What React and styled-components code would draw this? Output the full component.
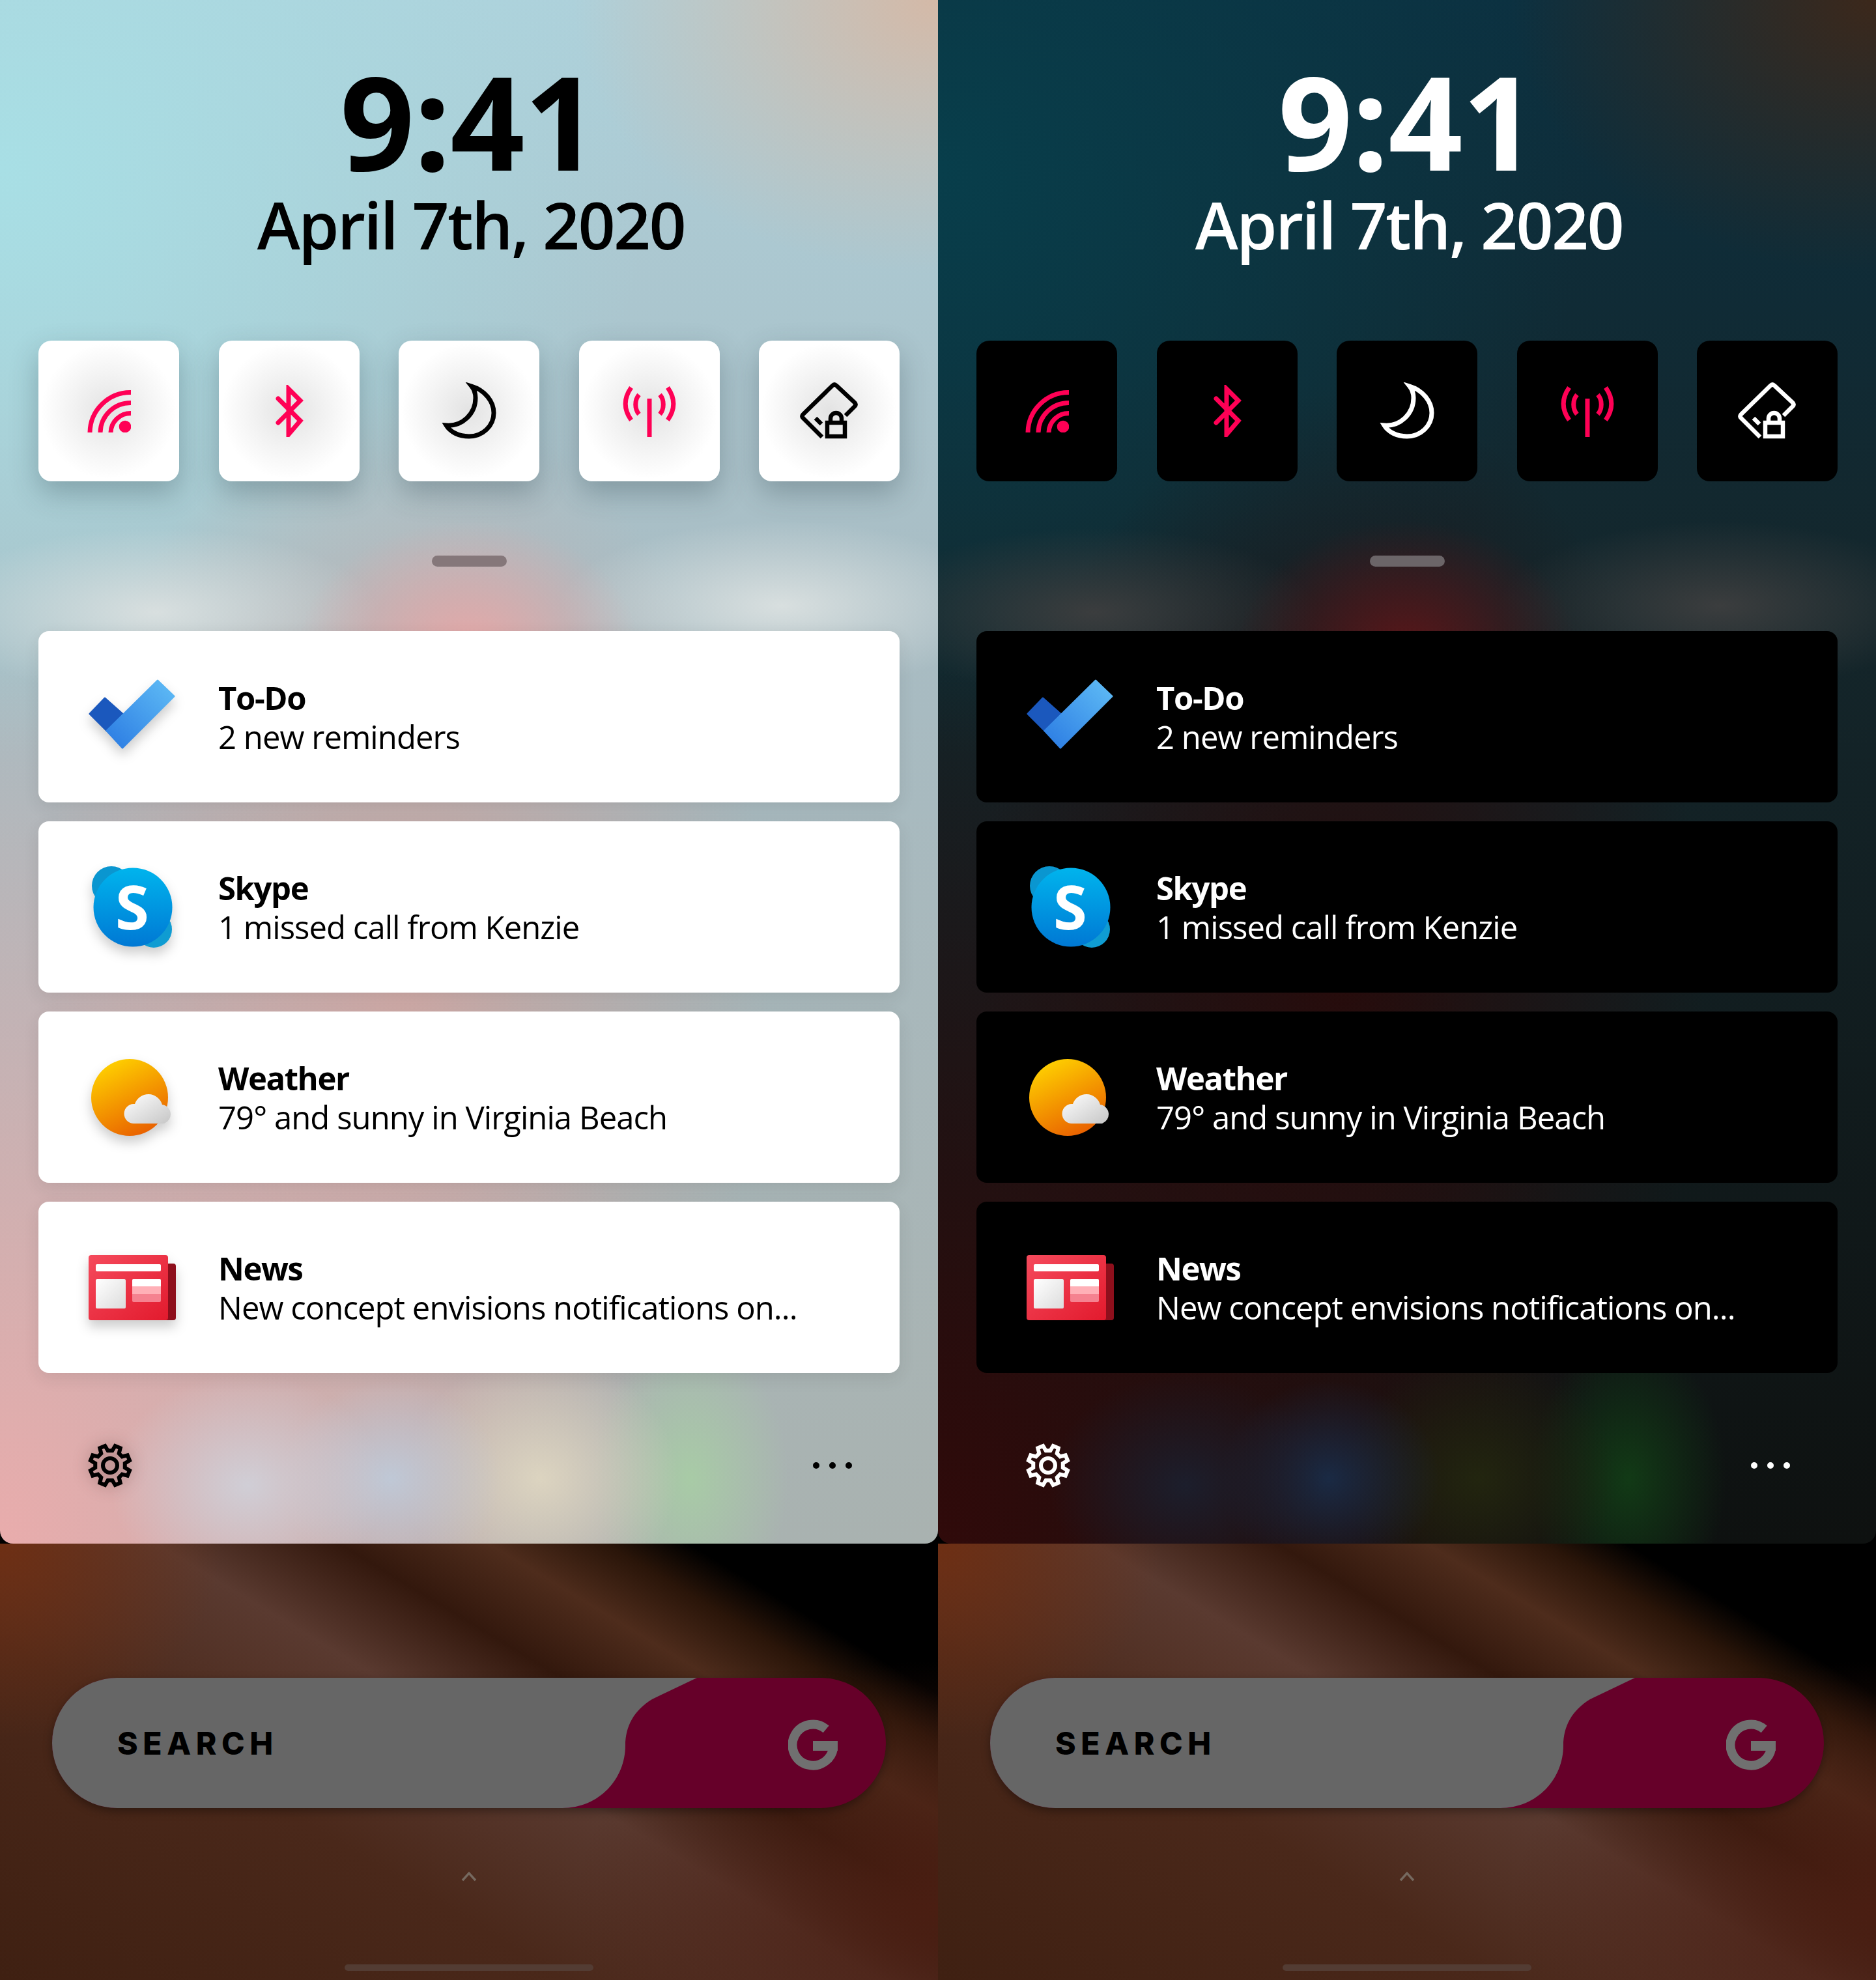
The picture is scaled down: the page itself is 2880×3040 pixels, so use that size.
import React from 'react'
import styled, { createGlobalStyle, ThemeProvider } from 'styled-components'

const GlobalStyle = createGlobalStyle`
  html, body {
    margin: 0;
    padding: 0;
    background: #000;
  }
  * {
    box-sizing: border-box;
  }
`

const PINK = '#ff0055'

const wallpaper = (c) => `
  radial-gradient(210px 170px at 380px 2280px, ${c.blobA}, transparent),
  radial-gradient(170px 150px at 600px 2270px, ${c.blobB}, transparent),
  radial-gradient(210px 190px at 830px 2270px, ${c.blobC}, transparent),
  radial-gradient(150px 220px at 1060px 2270px, ${c.blobD}, transparent),
  radial-gradient(260px 190px at 720px 990px, ${c.spot}, transparent),
  radial-gradient(340px 130px at 240px 940px, ${c.haze}, transparent),
  radial-gradient(340px 130px at 1200px 930px, ${c.haze}, transparent),
  radial-gradient(1050px 1350px at 0 2370px, ${c.corner}, transparent),
  radial-gradient(560px 900px at 620px 1500px, ${c.blush}, transparent),
  radial-gradient(560px 420px at 1440px 0, ${c.warm}, transparent),
  radial-gradient(1000px 900px at 0 260px, ${c.cool}, transparent),
  linear-gradient(180deg, ${c.top} 0, ${c.mid} 40%, ${c.end} 100%)
`

const lightTheme = {
  ink: '#000',
  card: '#fff',
  tile: 'radial-gradient(circle at center, #e3e3e3 0, #f3f3f3 38%, #fff 68%)',
  tileShadow: '0 18px 44px rgba(40, 60, 70, .3)',
  cardShadow: '0 8px 24px rgba(40, 40, 40, .1)',
  gearShadow: 'drop-shadow(0 0 12px rgba(60, 30, 30, .35))',
  handle: '#85777a',
  wall: wallpaper({
    blobA: '#d0ced6', blobB: '#bfc8d6', blobC: '#dcd4c0', blobD: '#a8cba6',
    spot: '#e4a8a8', haze: '#d8dfdf', corner: '#e9acac', blush: '#cba9a5',
    warm: '#d4b9a7', cool: '#a8dfe5', top: '#aed0da', mid: '#a8bcc3', end: '#a9b2b0'
  })
}

const darkTheme = {
  ink: '#fff',
  card: '#000',
  tile: '#000',
  tileShadow: 'none',
  cardShadow: 'none',
  gearShadow: 'none',
  handle: '#6b6568',
  wall: wallpaper({
    blobA: '#1c1e2c', blobB: '#1a2a44', blobC: '#22250f', blobD: '#123a16',
    spot: '#57171a', haze: '#3b3d3e', corner: '#300a0a', blush: '#250c0c',
    warm: '#3c281b', cool: '#083e4b', top: '#0c3040', mid: '#14262b', end: '#0e1110'
  })
}

const Page = styled.div`
  display: flex;
  width: 2880px;
  height: 3040px;
  overflow: hidden;
  font-family: "Open Sans", "Noto Sans", sans-serif;
`

const Screen = styled.div`
  display: flex;
  flex-direction: column;
  width: 1440px;
  height: 3040px;
  background:
    radial-gradient(340px 300px at 0 0, #6e2f14, transparent),
    radial-gradient(560px 380px at 1440px 560px, #4a1e12, transparent),
    linear-gradient(31deg, #3f2012 0%, #4a281a 34%, #5a3a30 53%, #33180d 64%, #4e2c1c 73%, #2a1509 80%, #000 85%, #000 100%);
  background-position: 0 2370px, 0 2370px, 0 2370px;
  background-size: 1440px 670px;
  background-repeat: no-repeat;
`

const Panel = styled.div`
  display: flex;
  flex-direction: column;
  height: 2370px;
  padding: 85px 59px 0;
  background: ${(p) => p.theme.wall};
  border-radius: 0 0 20px 20px;
  color: ${(p) => p.theme.ink};
`

const Time = styled.div`
  font-size: 200px;
  line-height: 200px;
  font-weight: 700;
  text-align: center;
  letter-spacing: -1px;
`

const DateLine = styled.div`
  margin: 9px 0 0 6px;
  font-size: 100px;
  line-height: 100px;
  font-weight: 600;
  text-align: center;
  letter-spacing: -2.6px;
`

const TileRow = styled.div`
  display: flex;
  justify-content: space-between;
  margin-top: 129px;
`

const Tile = styled.div`
  display: flex;
  align-items: center;
  justify-content: center;
  width: 216px;
  height: 216px;
  border-radius: 20px;
  background: ${(p) => p.theme.tile};
  box-shadow: ${(p) => p.theme.tileShadow};
  color: ${(p) => (p.$accent ? PINK : p.theme.ink)};
`

const Handle = styled.div`
  align-self: center;
  width: 115px;
  height: 17px;
  margin-top: 114px;
  border-radius: 9px;
  background: ${(p) => p.theme.handle};
`

const CardList = styled.div`
  display: flex;
  flex-direction: column;
  gap: 29px;
  margin-top: 99px;
`

const Card = styled.div`
  display: flex;
  align-items: center;
  height: 263px;
  padding-left: 74px;
  border-radius: 16px;
  background: ${(p) => p.theme.card};
  box-shadow: ${(p) => p.theme.cardShadow};
`

const CardIcon = styled.div`
  display: flex;
  align-items: center;
  justify-content: center;
  flex: none;
  width: 140px;
  margin-right: 62px;

  svg {
    filter: drop-shadow(0 10px 9px rgba(0, 0, 0, .2));
  }
`

const CardText = styled.div`
  font-size: 49px;
  line-height: 60px;
  letter-spacing: -.95px;
`

const CardTitle = styled.div`
  font-weight: 700;
  letter-spacing: -1.4px;
`

const BottomBar = styled.div`
  display: flex;
  align-items: center;
  justify-content: space-between;
  height: 66px;
  margin-top: 109px;
  padding: 0 73px 0 75px;

  > svg {
    filter: ${(p) => p.theme.gearShadow};
  }
`

const Dots = styled.div`
  display: flex;
  gap: 15px;
`

const Dot = styled.span`
  width: 10px;
  height: 10px;
  border-radius: 50%;
  background: ${(p) => p.theme.ink};
`

const Dock = styled.div`
  display: flex;
  flex-direction: column;
  align-items: center;
  flex: 1;
  padding-top: 206px;
`

const SearchBar = styled.div`
  position: relative;
  display: flex;
  align-items: center;
  justify-content: space-between;
  width: 1280px;
  height: 200px;
  padding: 0 74px 0 100px;
  overflow: hidden;
  border-radius: 100px;
  background: #660029;
  box-shadow: 0 5px 14px rgba(0, 0, 0, .35);
`

const SearchShape = styled.svg`
  position: absolute;
  top: 0;
  left: 0;
`

const SearchLabel = styled.span`
  position: relative;
  color: #000;
  font-family: Inter, sans-serif;
  font-size: 48px;
  font-weight: 800;
  letter-spacing: 7.6px;
`

const GoogleMark = styled.svg`
  position: relative;
  margin-top: 5px;
`

const Chevron = styled.svg`
  margin-top: 97px;
`

const HomeBar = styled.div`
  width: 382px;
  height: 10px;
  margin-top: 127px;
  border-radius: 5px;
  background: #533c33;
`

const WifiIcon = () => (
  <svg width='67' height='65' viewBox='0 0 67 65' fill='none' stroke='currentColor' strokeWidth='7'>
    <path d='M4 65A62.5 62.5 0 0 1 67 3.5' />
    <path d='M20 65A46.5 46.5 0 0 1 67 19.5' />
    <path d='M36 65A30.5 30.5 0 0 1 67 35.5' />
    <circle cx='58' cy='56' r='9.3' fill='currentColor' stroke='none' />
  </svg>
)

const BluetoothIcon = () => (
  <svg width='48' height='80' viewBox='0 0 48 80' fill='none' stroke='currentColor' strokeWidth='7'>
    <path d='M7 21L41 55L23 76V6L41 24L7 58' strokeLinecap='round' />
  </svg>
)

const MoonIcon = () => (
  <svg width='84' height='88' viewBox='-2 0 84 88' fill='none' stroke='currentColor' strokeWidth='7'>
    <path d='M44 6C64 12 78 29 78 47C78 67 61 83 40 83C24 83 11 76 5 66C30 68 50 48 50 24C50 17 48 11 44 6Z' />
  </svg>
)

const AntennaIcon = () => (
  <svg width='84' height='82' viewBox='0 0 84 82' fill='none' stroke='currentColor' strokeWidth='7'>
    <path d='M14 5C2 22 2 38 14 55M70 5C82 22 82 38 70 55' />
    <path d='M26 16C19 24 19 38 26 46M58 16C65 24 65 38 58 46' />
    <path d='M42 22V81' />
  </svg>
)

const HomeLockIcon = () => (
  <svg width='92' height='90' viewBox='0 0 92 90' fill='none' stroke='currentColor' strokeWidth='6.5'>
    <path d='M35 85L6 56Q3 53 6 50L51 6Q54 3 57 6L85 32Q88 35 85 38L71 52' />
    <path d='M25 56L34 65' />
    <rect x='43' y='63' width='27' height='21' />
    <path d='M48 63V56.5A8.5 8.5 0 0 1 65 56.5V63' />
  </svg>
)

const TodoIcon = () => (
  <svg width='134' height='117' viewBox='0 0 134 117'>
    <defs>
      <linearGradient id='todoBar' x1='1' y1='0' x2='0' y2='1'>
        <stop offset='0' stopColor='#60bdf6' />
        <stop offset='1' stopColor='#2a7ae2' />
      </linearGradient>
    </defs>
    <path d='M2 54L25 30L52 54L28 80Z' fill='#1b58bd' stroke='#1b58bd' strokeWidth='3' strokeLinejoin='round' />
    <path d='M106 3L131 27L52 106L28 80Z' fill='url(#todoBar)' stroke='url(#todoBar)' strokeWidth='3' strokeLinejoin='round' />
  </svg>
)

const SkypeIcon = () => (
  <svg width='127' height='127' viewBox='0 0 127 127' overflow='visible'>
    <defs>
      <linearGradient id='skypeBody' x1='0' y1='0' x2='0' y2='1'>
        <stop offset='0' stopColor='#00b4ed' />
        <stop offset='1' stopColor='#0078d4' />
      </linearGradient>
    </defs>
    <circle cx='31' cy='31' r='30' fill='#0a96d0' />
    <circle cx='96' cy='98' r='28' fill='#0f9cd2' />
    <circle cx='64' cy='64' r='60.5' fill='url(#skypeBody)' />
    <text x='63' y='98' textAnchor='middle' fontFamily='"Open Sans", sans-serif' fontSize='94' fontWeight='700' fill='#fff'>S</text>
  </svg>
)

const WeatherIcon = () => (
  <svg width='126' height='118' viewBox='0 0 126 118'>
    <defs>
      <linearGradient id='weatherSun' x1='.25' y1='0' x2='.75' y2='1'>
        <stop offset='0' stopColor='#ffd200' />
        <stop offset='1' stopColor='#e85c00' />
      </linearGradient>
      <linearGradient id='weatherCloud' x1='0' y1='0' x2='1' y2='1'>
        <stop offset='0' stopColor='#fff' />
        <stop offset='1' stopColor='#c6c6c6' />
      </linearGradient>
    </defs>
    <circle cx='59' cy='59' r='59' fill='url(#weatherSun)' />
    <path d='M66 99A15 15 0 0 1 65 69H67A22 22 0 0 1 109 70A15 15 0 0 1 112 99Z' fill='url(#weatherCloud)' />
  </svg>
)

const NewsIcon = () => (
  <svg width='134' height='100' viewBox='0 0 134 100'>
    <defs>
      <linearGradient id='newsPage' x1='0' y1='0' x2='1' y2='1'>
        <stop offset='0' stopColor='#f54a5c' />
        <stop offset='1' stopColor='#e21a2d' />
      </linearGradient>
      <linearGradient id='newsPhoto' x1='0' y1='0' x2='1' y2='1'>
        <stop offset='0' stopColor='#fff' />
        <stop offset='1' stopColor='#dcdcdc' />
      </linearGradient>
    </defs>
    <rect x='110' y='13' width='24' height='87' rx='4' fill='#8e0f1c' />
    <rect width='122' height='100' rx='4' fill='url(#newsPage)' />
    <rect x='11' y='14' width='100' height='11' rx='2' fill='#fff' />
    <rect x='11' y='37' width='46' height='45' rx='2' fill='url(#newsPhoto)' />
    <rect x='67' y='37' width='44' height='35' rx='2' fill='#f58290' />
    <path d='M67 39a2 2 0 0 1 2-2h40a2 2 0 0 1 2 2v21H67Z' fill='#ffb0b7' />
    <path d='M67 39a2 2 0 0 1 2-2h40a2 2 0 0 1 2 2v9H67Z' fill='#fff' />
  </svg>
)

const gearOutline = () => {
  const at = (r, deg) => {
    const a = (deg * Math.PI) / 180
    return `${(35 + r * Math.cos(a)).toFixed(2)} ${(35 + r * Math.sin(a)).toFixed(2)}`
  }
  const points = []
  for (let i = 0; i < 8; i++) {
    const mid = 22.5 + i * 45
    points.push(at(23, mid - 14), at(31, mid - 8), at(31, mid + 8), at(23, mid + 14))
  }
  return `M${points.join('L')}Z`
}

const GearIcon = () => (
  <svg width='70' height='70' viewBox='0 0 70 70' fill='none' stroke='currentColor' strokeWidth='6'>
    <path d={gearOutline()} />
    <circle cx='35' cy='35' r='11' />
  </svg>
)

const tiles = [
  { key: 'wifi', icon: <WifiIcon />, accent: true },
  { key: 'bluetooth', icon: <BluetoothIcon />, accent: true },
  { key: 'moon', icon: <MoonIcon /> },
  { key: 'antenna', icon: <AntennaIcon />, accent: true },
  { key: 'lock', icon: <HomeLockIcon /> }
]

const notifications = [
  { title: 'To-Do', body: '2 new reminders', icon: <TodoIcon /> },
  { title: 'Skype', body: '1 missed call from Kenzie', icon: <SkypeIcon /> },
  { title: 'Weather', body: '79° and sunny in Virginia Beach', icon: <WeatherIcon /> },
  { title: 'News', body: 'New concept envisions notifications on...', icon: <NewsIcon /> }
]

const Phone = ({ theme }) => (
  <ThemeProvider theme={theme}>
    <Screen>
      <Panel>
        <Time>9:41</Time>
        <DateLine>April 7th, 2020</DateLine>
        <TileRow>
          {tiles.map((t) => (
            <Tile key={t.key} $accent={t.accent}>{t.icon}</Tile>
          ))}
        </TileRow>
        <Handle />
        <CardList>
          {notifications.map((n) => (
            <Card key={n.title}>
              <CardIcon>{n.icon}</CardIcon>
              <CardText>
                <CardTitle>{n.title}</CardTitle>
                {n.body}
              </CardText>
            </Card>
          ))}
        </CardList>
        <BottomBar>
          <GearIcon />
          <Dots>
            <Dot />
            <Dot />
            <Dot />
          </Dots>
        </BottomBar>
      </Panel>
      <Dock>
        <SearchBar>
          <SearchShape width='1280' height='200' viewBox='0 0 1280 200'>
            <path d='M0 0H990L921 33C893 50 880 75 880 104C880 155 840 200 783 200H0Z' fill='#666' />
          </SearchShape>
          <SearchLabel>SEARCH</SearchLabel>
          <GoogleMark width='76' height='78' viewBox='0 0 76 78' fill='none'>
            <path d='M58.2 14.9A31.5 31.5 0 1 0 69.5 40' stroke='#707070' strokeWidth='14' />
            <rect x='38' y='33' width='38' height='15' fill='#707070' />
          </GoogleMark>
        </SearchBar>
        <Chevron width='24' height='16' viewBox='0 0 24 16' fill='none' stroke='#75695f' strokeWidth='3.5'>
          <path d='M2 14L12 3L22 14' />
        </Chevron>
        <HomeBar />
      </Dock>
    </Screen>
  </ThemeProvider>
)

const App = () => (
  <>
    <GlobalStyle />
    <Page>
      <Phone theme={lightTheme} />
      <Phone theme={darkTheme} />
    </Page>
  </>
)

export default App
